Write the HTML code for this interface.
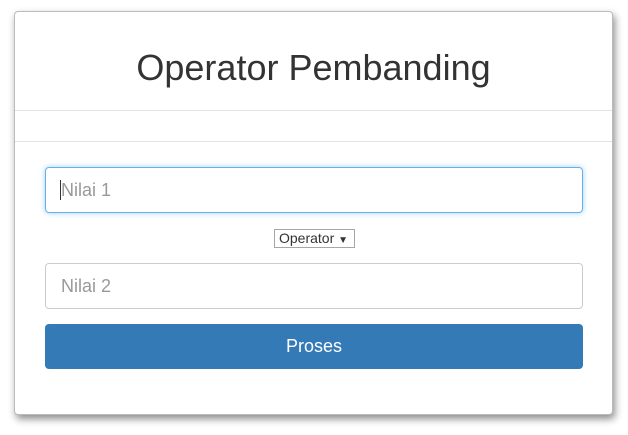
<!DOCTYPE html>
<html><head><style>
body{margin:0;width:628px;height:435px;background:#fff;font-family:"Liberation Sans",sans-serif;position:relative;overflow:hidden}
.card{position:absolute;left:14px;top:11px;width:597px;height:402px;border:1px solid #bbb;border-radius:4px;background:#fff;box-shadow:2px 4px 8px rgba(0,0,0,.45)}
h1{position:absolute;left:0;width:100%;top:36px;margin:0;text-align:center;font-weight:normal;font-size:36px;color:#333;line-height:40px}
.hr{position:absolute;left:0;width:100%;height:1px;background:#e3e3e3}
.in{position:absolute;left:30px;height:44px;border:1px solid #ccc;border-radius:4px;font-size:18px;color:#999;line-height:44px;padding-left:15px;width:521px}
.sel{position:absolute;left:259px;top:217px;border:1px solid #a6a6a6;font-size:14px;color:#333;line-height:17px;padding-left:4px;box-sizing:border-box;width:81px;height:19px}
.btn{position:absolute;left:30px;top:312px;width:538px;height:45px;background:#337ab7;border-radius:4px;color:#fff;font-size:18px;text-align:center;line-height:45px}
</style></head><body>
<div class="card">
<h1>Operator Pembanding</h1>
<div class="hr" style="top:98px"></div>
<div class="hr" style="top:129px"></div>
<div class="in" style="top:155px;border-color:#66afe9;box-shadow:0 0 6px rgba(102,175,233,.6)"><span style="border-left:1px solid #333;margin-left:-1px"></span>Nilai 1</div>
<div class="sel">Operator <span style="font-size:10px">▼</span></div>
<div class="in" style="top:251px">Nilai 2</div>
<div class="btn">Proses</div>
</div>
</body></html>
